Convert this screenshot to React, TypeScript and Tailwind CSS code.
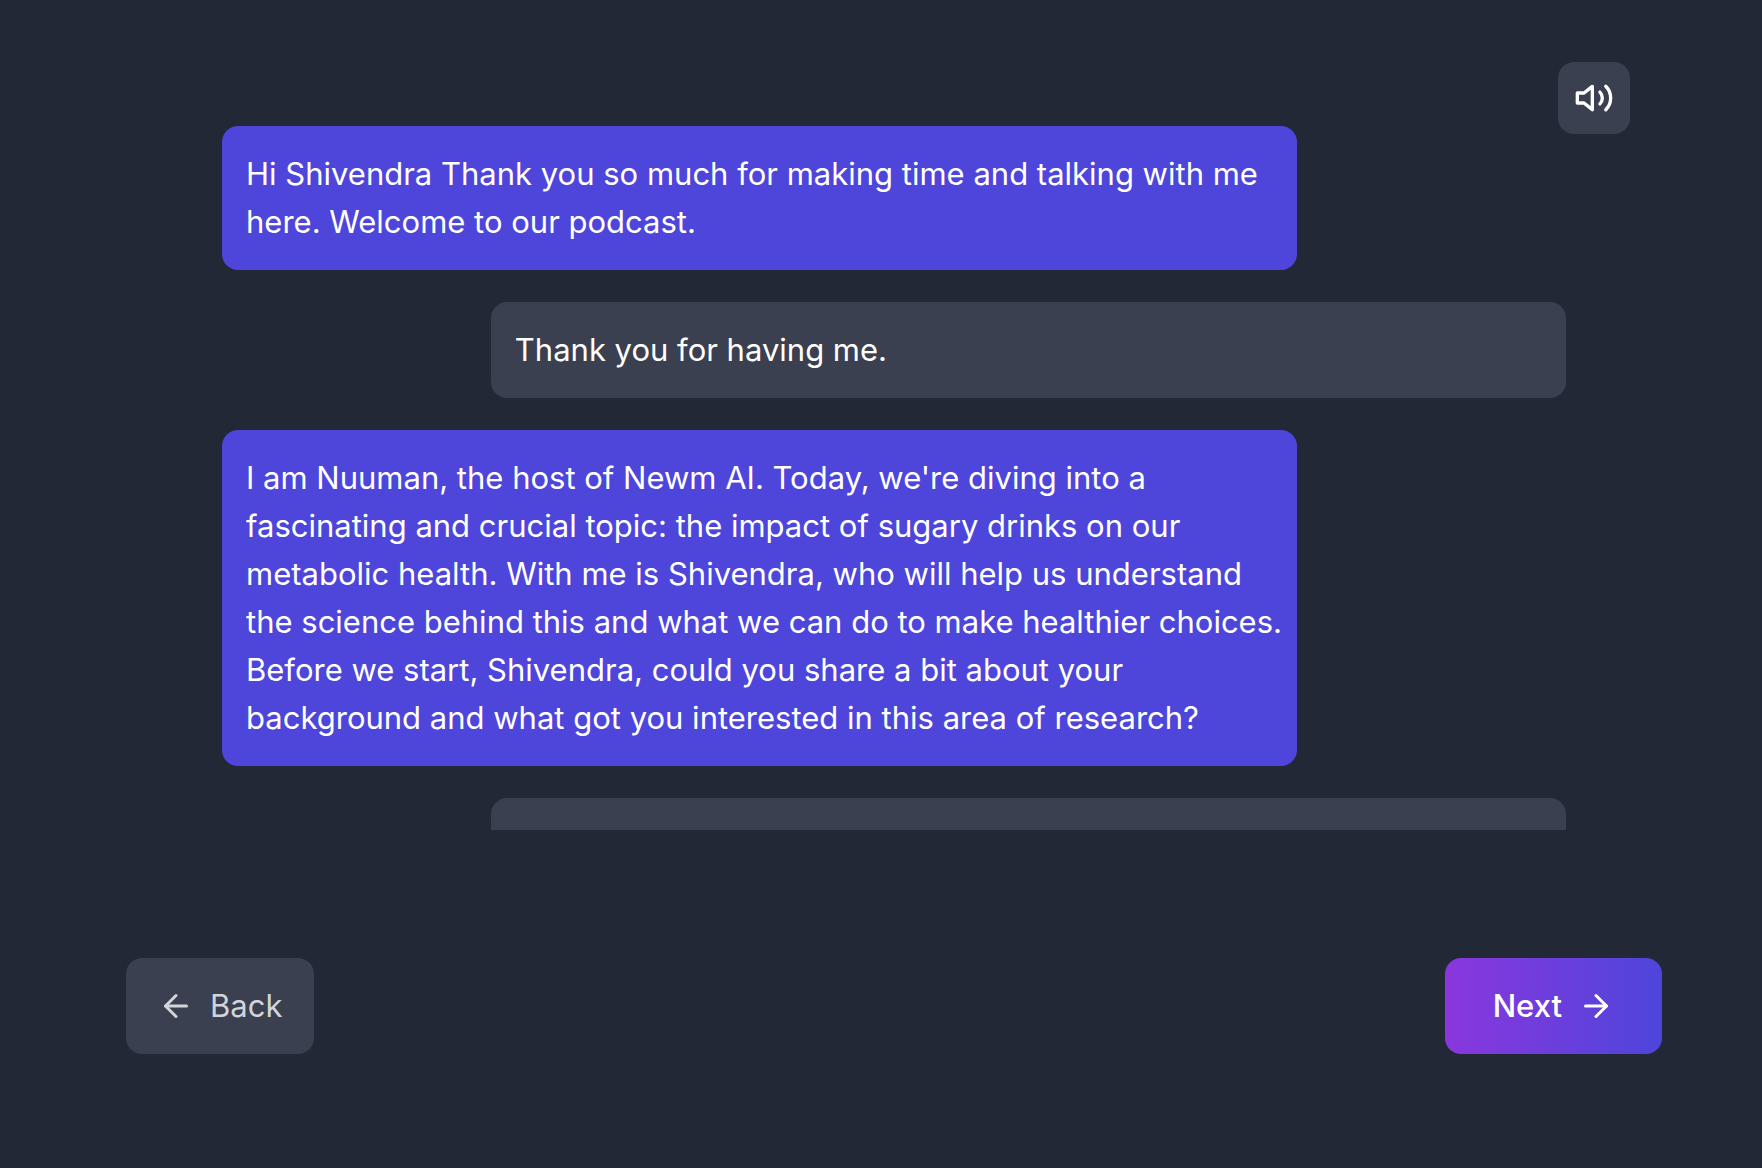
import React from "react";

type Message = { from: "host" | "guest"; text: string };

const messages: Message[] = [
  {
    from: "host",
    text: "Hi Shivendra Thank you so much for making time and talking with me here. Welcome to our podcast.",
  },
  { from: "guest", text: "Thank you for having me." },
  {
    from: "host",
    text: "I am Nuuman, the host of Newm AI. Today, we're diving into a fascinating and crucial topic: the impact of sugary drinks on our metabolic health. With me is Shivendra, who will help us understand the science behind this and what we can do to make healthier choices. Before we start, Shivendra, could you share a bit about your background and what got you interested in this area of research?",
  },
  { from: "guest", text: "" },
];

function Bubble({ from, text }: Message) {
  const look = from === "host" ? "self-start bg-[#4e45db]" : "self-end bg-[#3a404f]";
  return (
    <li className={`min-h-24 w-4/5 shrink-0 rounded-2xl py-6 pr-3 pl-6 text-[31px] leading-[48px] text-white ${look}`}>
      {text}
    </li>
  );
}

function Icon({ className, children }: { className: string; children: React.ReactNode }) {
  return (
    <svg
      viewBox="0 0 24 24"
      className={className}
      fill="none"
      stroke="currentColor"
      strokeWidth="2"
      strokeLinecap="round"
      strokeLinejoin="round"
      aria-hidden="true"
    >
      {children}
    </svg>
  );
}

export default function App() {
  return (
    <main className="relative min-h-screen bg-[#222835] pt-[126px] pr-[100px] pb-28 pl-[126px] font-['Inter',sans-serif]">
      <button
        type="button"
        aria-label="Play audio"
        className="absolute top-[62px] right-[132px] flex size-18 items-center justify-center rounded-2xl bg-[#3a404f] text-white"
      >
        <Icon className="size-10">
          <polygon points="11 5 6 9 2 9 2 15 6 15 11 19 11 5" />
          <path d="M15.54 8.46a5 5 0 0 1 0 7.07" />
          <path d="M19.07 4.93a10 10 0 0 1 0 14.14" />
        </Icon>
      </button>

      <ul className="mx-24 flex h-[704px] flex-col gap-8 overflow-hidden">
        {messages.map((message, i) => (
          <Bubble key={i} {...message} />
        ))}
      </ul>

      <nav className="mt-32 flex items-center justify-between text-[31px] leading-[48px]">
        <button
          type="button"
          className="flex items-center gap-4 rounded-2xl bg-[#3a404f] px-8 py-6 text-[#d1d5db]"
        >
          <Icon className="size-9">
            <path d="M19 12H5" />
            <path d="m12 19-7-7 7-7" />
          </Icon>
          Back
        </button>
        <button
          type="button"
          className="flex items-center gap-4 rounded-2xl bg-linear-to-r/srgb from-[#8a37dd] to-[#4e45db] px-12 py-6 font-medium text-white"
        >
          Next
          <Icon className="size-9">
            <path d="M5 12h14" />
            <path d="m12 5 7 7-7 7" />
          </Icon>
        </button>
      </nav>
    </main>
  );
}
